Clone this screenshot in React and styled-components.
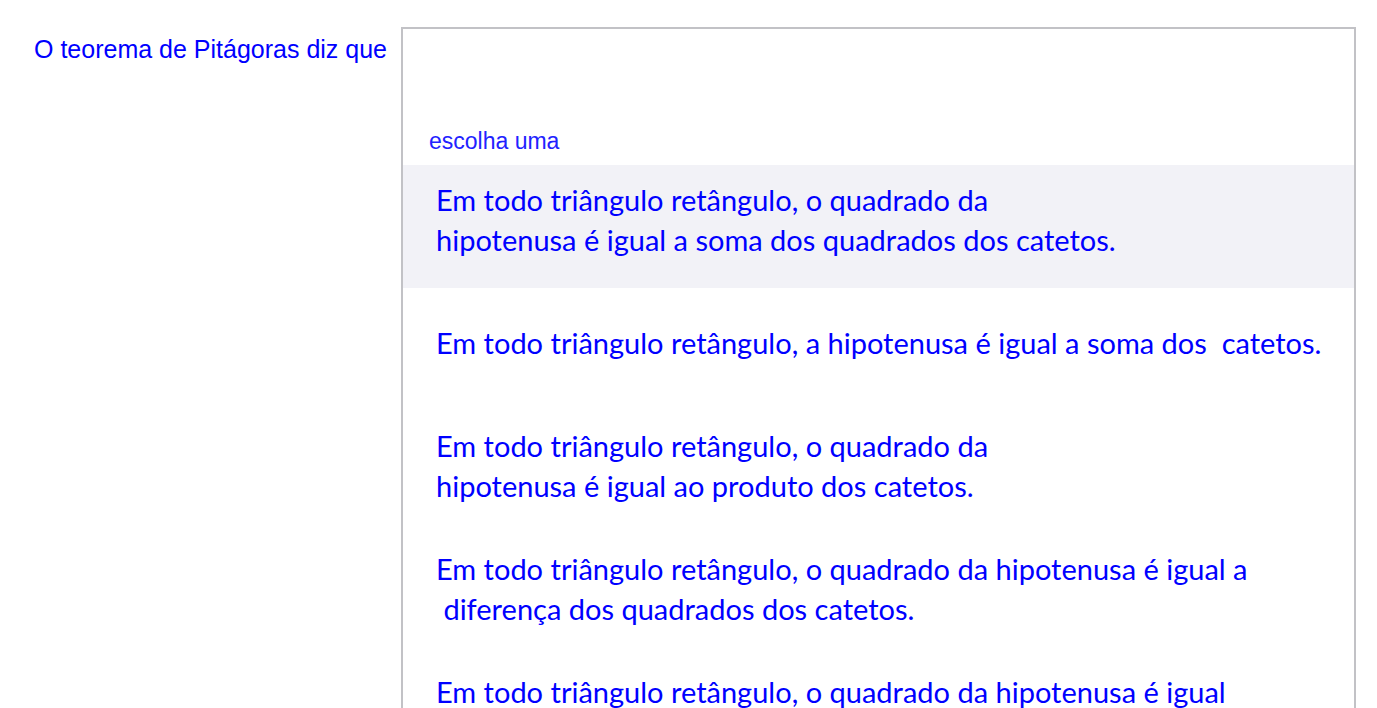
import React from 'react';
import styled, { createGlobalStyle } from 'styled-components';

const GlobalStyle = createGlobalStyle`
  html, body {
    margin: 0;
    padding: 0;
    background: #ffffff;
  }
  body {
    font-family: "Liberation Sans", Arial, sans-serif;
  }
`;

const Page = styled.div`
  display: flex;
  align-items: flex-start;
  padding-top: 27px;
`;

const Prompt = styled.div`
  width: 401px;
  box-sizing: border-box;
  padding: 7px 14px 0 0;
  text-align: right;
  color: #0000ff;
  font-size: 25px;
  line-height: 30px;
`;

const ChoiceBox = styled.div`
  width: 955px;
  box-sizing: border-box;
  border: 2px solid #c2c2c6;
  border-bottom: none;
  padding-top: 96px;
  min-height: 720px;
`;

const Hint = styled.div`
  padding: 0 0 8px 26px;
  color: #2222ff;
  font-size: 23px;
  line-height: 32px;
`;

const Option = styled.div`
  display: flex;
  align-items: center;
  min-height: 84px;
  padding: 13px 20px 26px 33px;
  background: ${({ selected }) => (selected ? '#f2f2f7' : 'transparent')};
  color: #0000ff;
  font-family: Lato, "Liberation Sans", sans-serif;
  font-size: 29px;
  line-height: 40px;
  white-space: pre;
  cursor: pointer;
`;

const Lines = styled.div`
  display: flex;
  flex-direction: column;
`;

const options = [
  ['Em todo triângulo retângulo, o quadrado da', 'hipotenusa é igual a soma dos quadrados dos catetos.'],
  ['Em todo triângulo retângulo, a hipotenusa é igual a soma dos  catetos.'],
  ['Em todo triângulo retângulo, o quadrado da', 'hipotenusa é igual ao produto dos catetos.'],
  ['Em todo triângulo retângulo, o quadrado da hipotenusa é igual a', ' diferença dos quadrados dos catetos.'],
  ['Em todo triângulo retângulo, o quadrado da hipotenusa é igual', 'ao dobro do produto dos catetos.'],
];

export default function App() {
  return (
    <>
      <GlobalStyle />
      <Page>
        <Prompt>O teorema de Pitágoras diz que</Prompt>
        <ChoiceBox>
          <Hint>escolha uma</Hint>
          {options.map((lines, i) => (
            <Option key={i} selected={i === 0}>
              <Lines>
                {lines.map((l, j) => (
                  <span key={j}>{l}</span>
                ))}
              </Lines>
            </Option>
          ))}
        </ChoiceBox>
      </Page>
    </>
  );
}
